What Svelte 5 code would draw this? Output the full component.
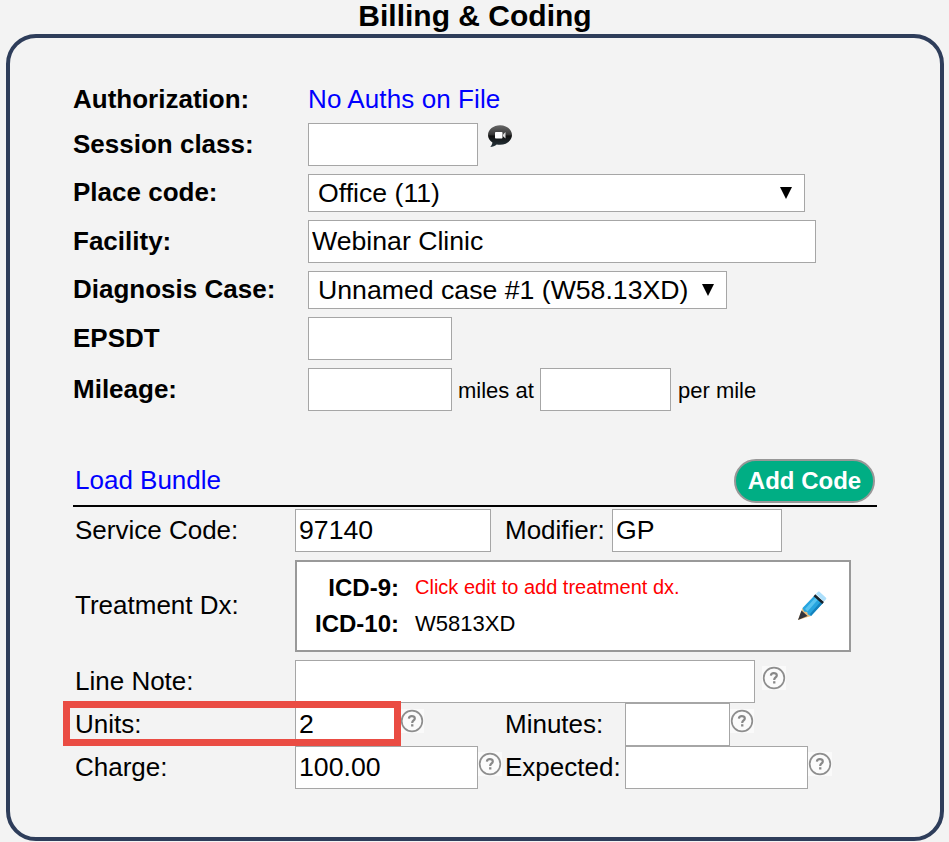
<script>
  let sessionClass = '';
  let placeCode = 'Office (11)';
  let facility = 'Webinar Clinic';
  let diagnosisCase = 'Unnamed case #1 (W58.13XD)';
  let epsdt = '';
  let miles = '';
  let mileRate = '';
  let serviceCode = '97140';
  let modifier = 'GP';
  let lineNote = '';
  let units = '2';
  let minutes = '';
  let charge = '100.00';
  let expected = '';
</script>

{#snippet help()}
  <svg class="help" viewBox="0 0 24 24" width="24" height="24">
    <rect width="24" height="24" fill="#fafafa" />
    <circle cx="12" cy="12" r="10.3" fill="#fbfbfb" stroke="#8e8e8e" stroke-width="1.7" />
    <path d="M8.900 9.600C9 7.900 10.200 7.100 11.800 7.100c1.800 0 3 .9 3 2.300 0 2-2.600 2.100-2.600 4.500" fill="none" stroke="#888" stroke-width="2.200" />
    <rect x="11.100" y="15.200" width="2.300" height="2.300" fill="#888" />
  </svg>
{/snippet}

<main>
  <h1>Billing &amp; Coding</h1>

  <section class="panel">
    <div class="session">
      <div class="row auth">
        <label for="auth">Authorization:</label>
        <a id="auth" href="#auths">No Auths on File</a>
      </div>
      <div class="row">
        <label for="session-class">Session class:</label>
        <input id="session-class" class="w170" bind:value={sessionClass} />
        <svg class="video" viewBox="0 0 26 26" width="26" height="26">
          <defs>
            <linearGradient id="bubble" x1="0" y1="0" x2="0" y2="1">
              <stop offset="0" stop-color="#666" />
              <stop offset="0.42" stop-color="#3a3a3a" />
              <stop offset="0.5" stop-color="#111" />
              <stop offset="1" stop-color="#26343c" />
            </linearGradient>
          </defs>
          <path d="M13 2.200C6.400 2.200 1 6.600 1 12c0 3.100 1.700 5.700 4.400 7.500C5.200 21 4.500 22.500 3.200 24c2.600-.2 4.800-1.200 6.500-2.600 1.100.3 2.200.4 3.300.4 6.600 0 12-4.400 12-9.800S19.600 2.200 13 2.200z" fill="url(#bubble)" />
          <rect x="8" y="9" width="7.500" height="6.500" rx="0.8" fill="#fff" />
          <path d="M16 11.500L18.500 9v6.500L16 13.300z" fill="#ddd" />
        </svg>
      </div>
      <div class="row">
        <label for="place">Place code:</label>
        <div class="select w497">
          <select id="place" bind:value={placeCode}>
            <option>Office (11)</option>
          </select>
          <svg class="arrow" viewBox="0 0 12 12" width="12" height="12"><path d="M0 0h12L6 12z" /></svg>
        </div>
      </div>
      <div class="row">
        <label for="facility">Facility:</label>
        <input id="facility" class="w508" bind:value={facility} />
      </div>
      <div class="row">
        <label for="case">Diagnosis Case:</label>
        <div class="select w419">
          <select id="case" bind:value={diagnosisCase}>
            <option>Unnamed case #1 (W58.13XD)</option>
          </select>
          <svg class="arrow" viewBox="0 0 12 12" width="12" height="12"><path d="M0 0h12L6 12z" /></svg>
        </div>
      </div>
      <div class="row">
        <label for="epsdt">EPSDT</label>
        <input id="epsdt" class="w144" bind:value={epsdt} />
      </div>
      <div class="row">
        <label for="miles">Mileage:</label>
        <input id="miles" class="w144" bind:value={miles} />
        <span class="unit at">miles at</span>
        <input class="w131" bind:value={mileRate} />
        <span class="unit">per mile</span>
      </div>
    </div>

    <div class="toolbar">
      <a href="#bundle">Load Bundle</a>
      <button type="button">Add Code</button>
    </div>

    <div class="code">
      <div class="line first">
        <label for="service">Service Code:</label>
        <input id="service" class="w196" bind:value={serviceCode} />
        <label class="second modifier" for="modifier">Modifier:</label>
        <input id="modifier" class="w170" bind:value={modifier} />
      </div>
      <div class="line dx">
        <span class="label">Treatment Dx:</span>
        <div class="dx-box">
          <dl>
            <dt>ICD-9:</dt>
            <dd class="warn">Click edit to add treatment dx.</dd>
            <dt>ICD-10:</dt>
            <dd>W5813XD</dd>
          </dl>
          <svg class="pencil" viewBox="0 0 30 30" width="30" height="30">
            <path d="M1 29L5.500 17 14 25z" fill="#e8bd7e" />
            <path d="M1 29L4.500 19.500 10.500 25z" fill="#33343b" />
            <path d="M5.500 17L17 5l8.500 7.500L14 25l-3-1.500-1-2.500-3-.5z" fill="#27a5df" />
            <path d="M8 18L18.500 6.500l2.500 2L10.500 20.500z" fill="#58c3ef" />
            <path d="M13 23L23.500 11l2 1.500L14 25z" fill="#1482bd" />
            <path d="M16.500 5.200l1.800-1.900 8.700 7.700-1.700 1.900z" fill="#17242d" />
            <path d="M18.900 3L21 .8c.5-.5 1-.5 1.500 0l6.500 6c.5.5.5 1 0 1.500L27 10.500z" fill="#ade0fc" />
          </svg>
        </div>
      </div>
      <div class="line">
        <label for="note">Line Note:</label>
        <input id="note" class="w460" bind:value={lineNote} />
        <span class="note-help">{@render help()}</span>
      </div>
      <div class="line units">
        <label for="units">Units:</label>
        <div class="pair">
          <input id="units" class="w105" bind:value={units} />
          {@render help()}
        </div>
        <label class="second" for="minutes">Minutes:</label>
        <input id="minutes" class="w105" bind:value={minutes} />
        {@render help()}
        <div class="highlight"></div>
      </div>
      <div class="line">
        <label for="charge">Charge:</label>
        <div class="pair">
          <input id="charge" class="w183" bind:value={charge} />
          {@render help()}
        </div>
        <label class="second" for="expected">Expected:</label>
        <input id="expected" class="w183" bind:value={expected} />
        {@render help()}
      </div>
    </div>
  </section>
</main>

<style>
  :global(body) {
    background: #f3f3f3;
  }

  main {
    box-sizing: border-box;
    height: 842px;
    padding: 0 5px 0 6px;
    overflow: hidden;
    font: 26px 'Liberation Sans', Arial, sans-serif;
    color: #000;
  }

  h1 {
    height: 34px;
    margin: 0;
    font-size: 30px;
    line-height: 32px;
    text-align: center;
  }

  .panel {
    box-sizing: border-box;
    height: 807px;
    padding: 46px 63px 0;
    border: 4px solid #2e3d5a;
    border-radius: 30px;
  }

  .session {
    display: flex;
    flex-direction: column;
    gap: 8px;
  }

  .row,
  .line {
    display: flex;
    align-items: center;
    white-space: nowrap;
  }

  .auth {
    height: 31px;
  }

  .row label {
    width: 235px;
    font-weight: bold;
  }

  label,
  .label,
  a {
    padding-bottom: 2px;
    line-height: 28px;
  }

  a {
    color: #00f;
    text-decoration: none;
  }

  .auth a {
    letter-spacing: 0.1px;
  }

  input {
    box-sizing: border-box;
    height: 43px;
    margin: 0;
    padding: 0 3px;
    border: 1px solid #a6a6a6;
    border-radius: 0;
    background: #fff;
    font: 26.67px 'Liberation Sans', Arial, sans-serif;
    color: #000;
  }

  .select {
    position: relative;
    height: 38px;
  }

  select {
    box-sizing: border-box;
    width: 100%;
    height: 38px;
    padding: 0 9px 1px;
    border: 1px solid #a6a6a6;
    border-radius: 0;
    background: #fff;
    appearance: none;
    font: 26.67px 'Liberation Sans', Arial, sans-serif;
    color: #000;
  }

  .arrow {
    position: absolute;
    top: 13px;
    right: 13px;
  }

  .video {
    align-self: flex-start;
    margin-left: 9px;
  }

  .unit {
    margin-left: 7px;
    padding-top: 2px;
    font-size: 22px;
  }

  .at {
    width: 82px;
    margin-left: 6px;
  }

  .toolbar {
    display: flex;
    justify-content: space-between;
    align-items: center;
    height: 44px;
    margin-top: 48px;
    padding: 0 2px;
  }

  button {
    width: 141px;
    height: 44px;
    padding: 0;
    border: 2px solid #979797;
    border-radius: 22px;
    background: #00ae84;
    color: #fff;
    font: bold 24px 'Liberation Sans', Arial, sans-serif;
  }

  .code {
    margin-top: 2px;
    padding: 2px 2px 0;
    border-top: 2px solid #000;
  }

  .line label,
  .label {
    width: 220px;
  }

  .line .second {
    width: 120px;
  }

  .line .modifier {
    width: 107px;
    margin-left: 14px;
  }

  .dx {
    margin: 8px 0;
  }

  .dx-box {
    box-sizing: border-box;
    display: flex;
    justify-content: space-between;
    width: 556px;
    height: 92px;
    padding: 8px 22px 0 18px;
    border: 2px solid #999;
    background: #fff;
  }

  dl {
    display: grid;
    grid-template-columns: 84px auto;
    grid-auto-rows: 36px;
    column-gap: 16px;
    margin: 0;
    line-height: 36px;
  }

  dt {
    font-size: 24px;
    font-weight: bold;
    text-align: right;
  }

  dd {
    margin: 0;
    font-size: 22px;
  }

  .warn {
    color: #f00;
    font-size: 20px;
    line-height: 34px;
  }

  .pencil {
    margin-top: 21px;
  }

  .help {
    flex: none;
    align-self: flex-start;
    display: block;
    margin-top: 6px;
  }

  .note-help {
    align-self: flex-start;
    margin-left: 7px;
  }

  .pair {
    display: flex;
    width: 210px;
  }

  .units {
    position: relative;
  }

  .highlight {
    position: absolute;
    box-sizing: border-box;
    top: -2px;
    left: -12px;
    width: 338px;
    height: 45px;
    border: 7px solid #ea4c43;
    pointer-events: none;
  }

  .w105 {
    width: 105px;
  }

  .w131 {
    width: 131px;
  }

  .w144 {
    width: 144px;
  }

  .w170 {
    width: 170px;
  }

  .w183 {
    width: 183px;
  }

  .w196 {
    width: 196px;
  }

  .w419 {
    width: 419px;
  }

  .w460 {
    width: 460px;
  }

  .w497 {
    width: 497px;
  }

  .w508 {
    width: 508px;
  }
</style>
